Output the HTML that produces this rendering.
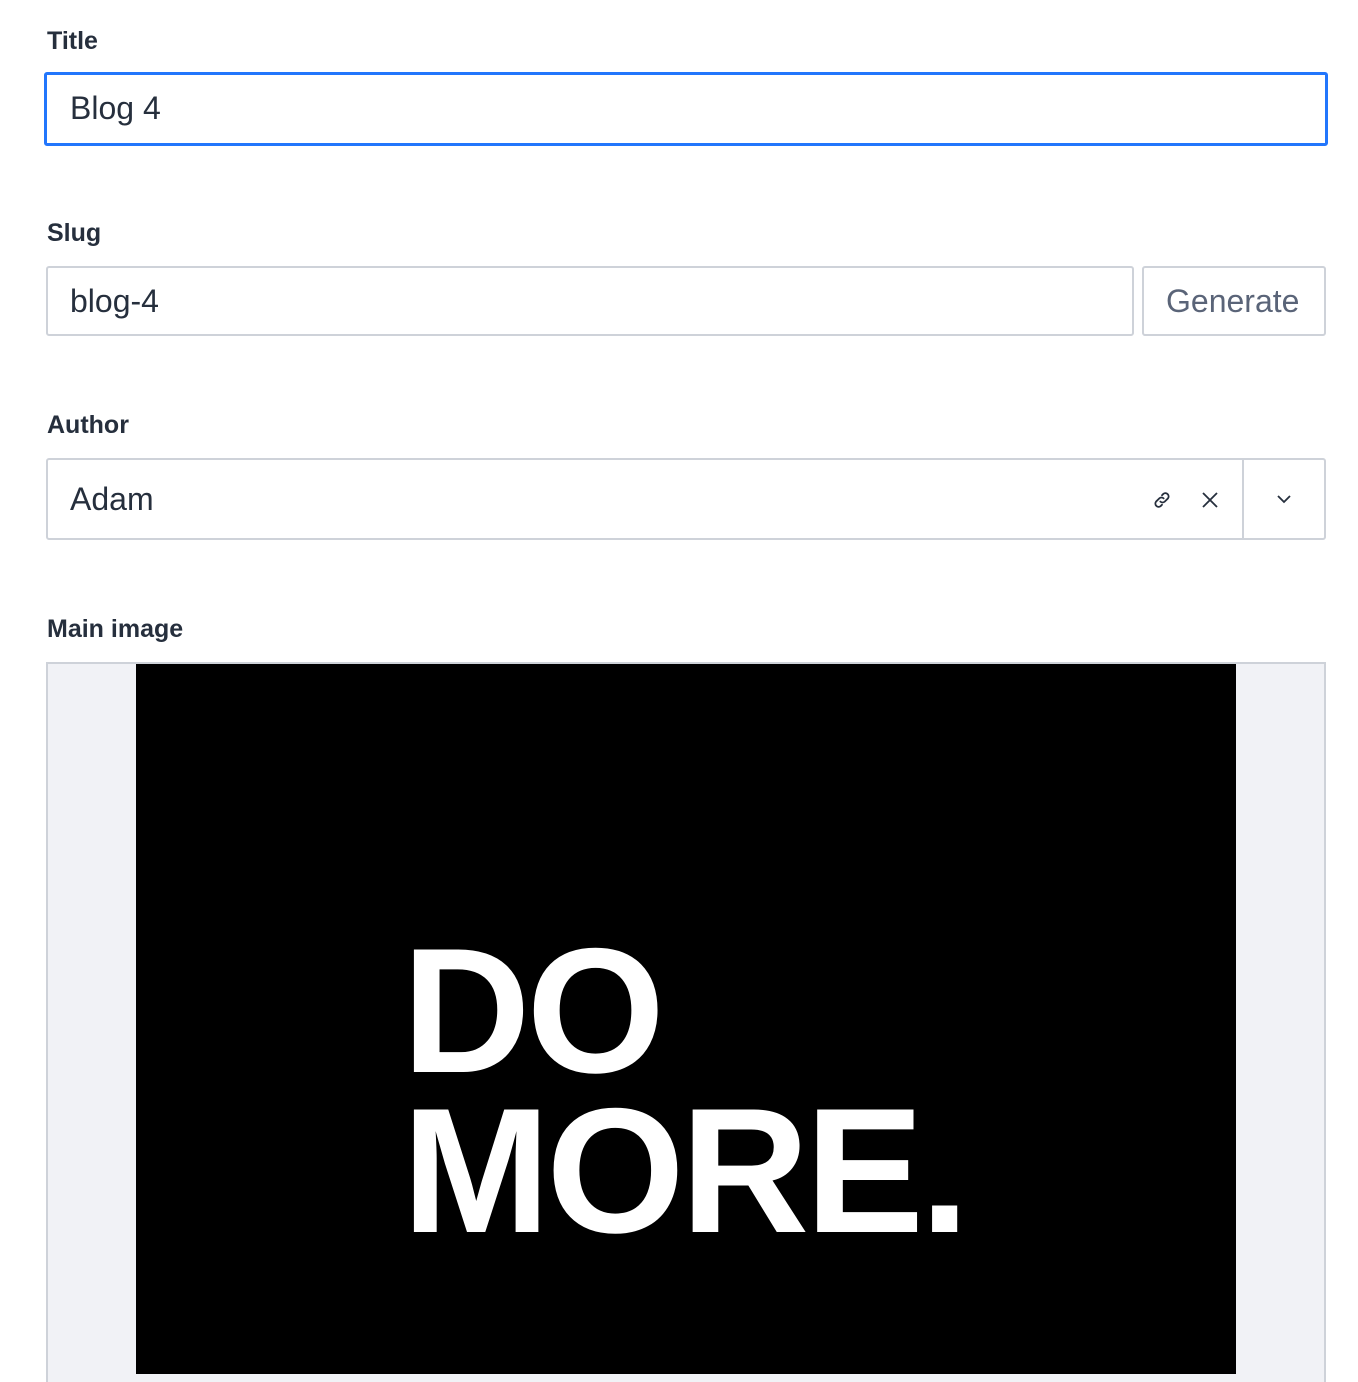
<!DOCTYPE html>
<html><head><style>
body{margin:0;background:#fff;font-family:"Liberation Sans",sans-serif;color:#262f3d;width:1358px;height:1372px;overflow:hidden;position:relative}
.lbl{position:absolute;left:47px;font-size:25px;font-weight:600;color:#262f3d}
.box{position:absolute;box-sizing:border-box;border:2px solid #ced2d9;border-radius:3px;background:#fff}
.txt{position:absolute;font-size:32px;color:#262f3d}
</style></head><body>
<div class="lbl" style="top:27px">Title</div>
<div class="box" style="left:44px;top:72px;width:1284px;height:74px;border:3px solid #2276fc"></div>
<div class="txt" style="left:70px;top:90px">Blog 4</div>

<div class="lbl" style="top:219px">Slug</div>
<div class="box" style="left:46px;top:266px;width:1088px;height:70px"></div>
<div class="txt" style="left:70px;top:283px">blog-4</div>
<div class="box" style="left:1142px;top:266px;width:184px;height:70px"></div>
<div class="txt" style="left:1166px;top:283px;color:#5a6478">Generate</div>

<div class="lbl" style="top:411px">Author</div>
<div class="box" style="left:46px;top:458px;width:1280px;height:82px"></div>
<div style="position:absolute;left:1242px;top:460px;width:2px;height:78px;background:#ced2d9"></div>
<div class="txt" style="left:70px;top:481px">Adam</div>
<svg style="position:absolute;left:1149px;top:487px" width="26" height="26" viewBox="0 0 24 24" fill="none" stroke="#262f3d" stroke-width="1.7" stroke-linecap="round"><path d="M10.5 13.5a3 3 0 0 0 4 0l3-3a3 3 0 0 0-4.2-4.2l-1.3 1.3"/><path d="M13.5 10.5a3 3 0 0 0-4 0l-3 3a3 3 0 0 0 4.2 4.2l1.3-1.3"/></svg>
<svg style="position:absolute;left:1199px;top:489px" width="22" height="22" viewBox="0 0 22 22" stroke="#262f3d" stroke-width="1.8"><path d="M4 4L18 18M18 4L4 18"/></svg>
<svg style="position:absolute;left:1275px;top:492px" width="18" height="16" viewBox="0 0 18 16" fill="none" stroke="#262f3d" stroke-width="1.8"><path d="M3 4l6 6 6-6"/></svg>

<div class="lbl" style="top:615px">Main image</div>
<div style="position:absolute;left:46px;top:662px;width:1280px;height:720px;box-sizing:border-box;border:2px solid #ced2d9;border-bottom:none;background:#f1f2f6"></div>
<div style="position:absolute;left:136px;top:664px;width:1100px;height:710px;background:#000"></div>
<div style="position:absolute;left:402px;top:931px;color:#fff;font-weight:bold;font-size:178px;line-height:160px;letter-spacing:-4px">DO<br>MORE.</div>
</body></html>
